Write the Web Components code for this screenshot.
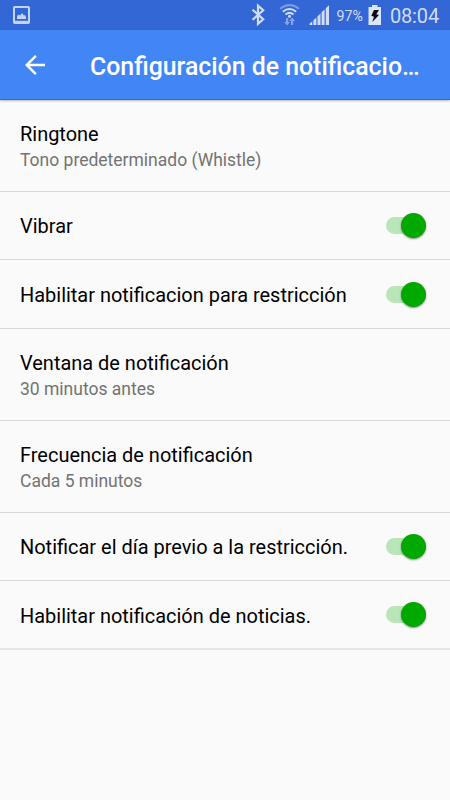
<!DOCTYPE html>
<html lang="es">
<head>
<meta charset="utf-8">
<title>Configuración de notificaciones</title>
<style>
    body {
        margin: 0;
        width: 450px;
        height: 800px;
        overflow: hidden;
        background: #fafafa;
        font-family: Roboto, 'Noto Sans', sans-serif;
    }
</style>
</head>
<body>
<settings-screen>
    <status-bar slot="status" time="08:04" battery="97%"></status-bar>
    <app-bar slot="header">Configuración de notificacio…</app-bar>
    <preference-row style="height: 92px">Ringtone<span slot="summary">Tono predeterminado (Whistle)</span></preference-row>
    <preference-row style="height: 68px">Vibrar<toggle-switch slot="widget"></toggle-switch></preference-row>
    <preference-row style="height: 69px">Habilitar notificacion para restricción<toggle-switch slot="widget"></toggle-switch></preference-row>
    <preference-row style="height: 92px">Ventana de notificación<span slot="summary">30 minutos antes</span></preference-row>
    <preference-row style="height: 92px">Frecuencia de notificación<span slot="summary">Cada 5 minutos</span></preference-row>
    <preference-row style="height: 68px">Notificar el día previo a la restricción.<toggle-switch slot="widget"></toggle-switch></preference-row>
    <preference-row style="height: 69px; --divider: 2px solid #e6e6e6; --text-offset: 3px">Habilitar notificación de noticias.<toggle-switch slot="widget"></toggle-switch></preference-row>
</settings-screen>

<script>
class SettingsScreen extends HTMLElement {
    constructor() {
        super();
        const shadowRoot = this.attachShadow({ mode: 'open' });
        shadowRoot.innerHTML = `
            <style>
            :host {
                display: flex;
                flex-direction: column;
                width: 450px;
                height: 800px;
            }
            .list {
                display: flex;
                flex-direction: column;
            }
            </style>
            <slot name="status"></slot>
            <slot name="header"></slot>
            <div class="list"><slot></slot></div>
        `;
    }
}

class StatusBar extends HTMLElement {
    constructor() {
        super();
        const shadowRoot = this.attachShadow({ mode: 'open' });
        shadowRoot.innerHTML = `
            <style>
            :host {
                display: flex;
                align-items: center;
                height: 30px;
                box-sizing: border-box;
                padding: 0 11px 0 12px;
                background: #3367d6;
                color: #d0dcf6;
            }
            svg {
                display: block;
                flex: none;
            }
            .bluetooth { margin-left: auto; }
            .wifi { margin-left: 14px; }
            .signal { margin-left: 9px; }
            .battery {
                margin-left: 7px;
                font-size: 14.2px;
                line-height: 30px;
                padding-top: 1px;
                box-sizing: border-box;
                height: 30px;
            }
            .cell { margin-left: 5px; }
            .time {
                margin-left: 8px;
                font-size: 20px;
                letter-spacing: -.15px;
                line-height: 30px;
                padding-top: 1px;
                box-sizing: border-box;
                height: 30px;
            }
            </style>
            <svg width="18" height="30" viewBox="0 0 18 30">
                <rect x="2" y="7" width="15" height="16" rx=".8" fill="none" stroke="#c4d3f3" stroke-width="2"/>
                <path d="M2 21.8h15" stroke="#c4d3f3" stroke-width="2"/>
                <path d="M5 19v-3l1.500-1.500 1.500 1 2-2.500 2 2.500 1-.5 1 2v2z" fill="#c4d3f3"/>
            </svg>
            <svg class="bluetooth" width="14" height="30" viewBox="0 0 14 30">
                <path d="M1.500 9.700l10.700 9.600-5.200 4.500V5.700l5.200 4.500L1.500 19.800" fill="none" stroke="currentColor" stroke-width="2.200"/>
            </svg>
            <svg class="wifi" width="21" height="30" viewBox="0 0 21 30">
                <g fill="none" stroke="currentColor" stroke-width="2">
                    <path d="M1 8.800Q10.500 1.200 20 8.800" stroke="#7c9ce5"/>
                    <path d="M3.800 11.800Q10.500 6.300 17.200 11.800"/>
                    <path d="M6.500 14.500Q10.500 11.300 14.500 14.500"/>
                </g>
                <circle cx="10.500" cy="16.200" r="1.500" fill="currentColor"/>
                <path d="M7 18h2.200v4H11l-2.900 3.400L5.200 22H7zM12 25v-4h-1.800l2.900-3.400 2.900 3.400h-1.800v4z" fill="#85a4e8"/>
            </svg>
            <svg class="signal" width="21" height="30" viewBox="0 0 21 30">
                <g fill="currentColor">
                    <path d="M.6 25v-1.400l2.700-2.200V25z"/>
                    <path d="M4.400 25v-4.800L7.400 17.400V25z"/>
                    <path d="M8.500 25v-8.600l3-2.900V25z"/>
                    <path d="M12.600 25V12.300l3-2.900V25z"/>
                    <path d="M16.800 25V8.200L20 5.200V25z"/>
                </g>
            </svg>
            <span class="battery"></span>
            <svg class="cell" width="14" height="30" viewBox="0 0 14 30">
                <path d="M4 5h5.500v2H13v18H.5V7H4z" fill="#dce6fa"/>
                <path d="M6 10h5l-2.700 4.300L11 15l-6.700 7 1.700-5.300-2.700-.9z" fill="#0b0d12"/>
            </svg>
            <span class="time"></span>
        `;
        shadowRoot.querySelector('.battery').textContent = this.getAttribute('battery');
        shadowRoot.querySelector('.time').textContent = this.getAttribute('time');
    }
}

class AppBar extends HTMLElement {
    constructor() {
        super();
        const shadowRoot = this.attachShadow({ mode: 'open' });
        shadowRoot.innerHTML = `
            <style>
            :host {
                display: flex;
                align-items: center;
                position: relative;
                height: 70px;
                box-sizing: border-box;
                border-bottom: 1px solid #1a73e8;
                padding-left: 20px;
                background: #4285f4;
                color: #fff;
                box-shadow: 0 1px 2px rgba(0, 0, 0, .28);
            }
            .title {
                margin-left: 40px;
                font-size: 24.85px;
                font-weight: 500;
                line-height: 30px;
                padding-top: 5px;
                white-space: nowrap;
            }
            </style>
            <svg width="30" height="30" viewBox="0 0 24 24">
                <path d="M20 11H7.830l5.590-5.590L12 4l-8 8 8 8 1.410-1.410L7.830 13H20v-2z" fill="#fff"/>
            </svg>
            <div class="title"><slot></slot></div>
        `;
    }
}

class PreferenceRow extends HTMLElement {
    constructor() {
        super();
        const shadowRoot = this.attachShadow({ mode: 'open' });
        shadowRoot.innerHTML = `
            <style>
            :host {
                display: flex;
                align-items: center;
                justify-content: space-between;
                box-sizing: border-box;
                padding: 0 20px;
                border-bottom: var(--divider, 1px solid #d8d8d8);
            }
            .text {
                display: flex;
                flex-direction: column;
                padding-top: var(--text-offset, 1px);
                white-space: nowrap;
            }
            .title {
                font-size: 19.97px;
                line-height: 26px;
                color: #000;
            }
            .summary {
                margin: 1px 0 -1px;
                font-size: 17.5px;
                line-height: 24px;
                color: #737373;
            }
            </style>
            <div class="text">
                <div class="title"><slot></slot></div>
                <div class="summary"><slot name="summary"></slot></div>
            </div>
            <slot name="widget"></slot>
        `;
    }
}

class ToggleSwitch extends HTMLElement {
    constructor() {
        super();
        const shadowRoot = this.attachShadow({ mode: 'open' });
        shadowRoot.innerHTML = `
            <style>
            :host {
                display: flex;
                align-items: center;
                width: 44px;
                height: 26px;
            }
            .track {
                display: flex;
                align-items: center;
                justify-content: flex-end;
                width: 40px;
                height: 17px;
                border-radius: 9px;
                background: #b9e6b9;
            }
            .thumb {
                flex: none;
                width: 25px;
                height: 25px;
                border-radius: 50%;
                background: #00a800;
                box-shadow: 0 1px 2px rgba(0, 0, 0, .45);
            }
            </style>
            <div class="track"><div class="thumb"></div></div>
        `;
    }
}

customElements.define('settings-screen', SettingsScreen);
customElements.define('status-bar', StatusBar);
customElements.define('app-bar', AppBar);
customElements.define('preference-row', PreferenceRow);
customElements.define('toggle-switch', ToggleSwitch);
</script>
</body>
</html>
